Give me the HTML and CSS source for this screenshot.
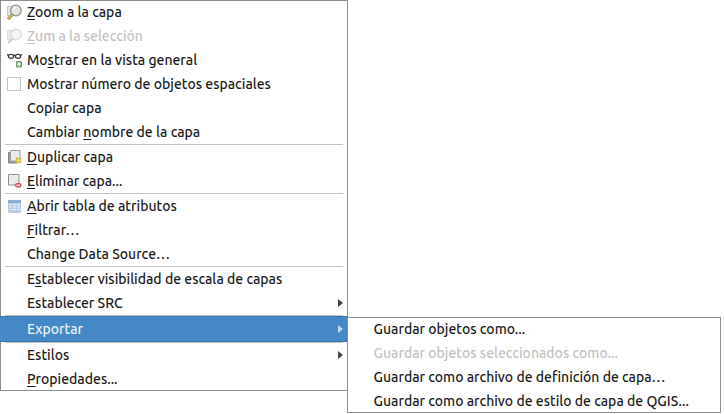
FILE: index.html
```html
<!DOCTYPE html>
<html lang="es">
<head>
<meta charset="utf-8">
<title>Menú de capa</title>
<link rel="stylesheet" href="styles.css">
</head>
<body>
<ul class="menu main" role="menu">
  <li><button class="item" role="menuitem"><svg class="icon" viewBox="0 0 16 16"><path d="M.5 2.500h8v9h-8z" fill="#e3e3e1" stroke="#c9c9c7"/><path d="M5.500 10.500 1 15" stroke="#8c8060" stroke-width="3"/><path d="M5.500 10.500 1 15" stroke="#e8bd35" stroke-width="1.600"/><circle cx="8.900" cy="6.500" r="5.300" fill="#e3e3e1" stroke="#91918f" stroke-width="1.200"/><path d="M6 5.500a3 3 0 0 1 3-2.200" fill="none" stroke="#fff" stroke-width="1.300"/></svg><span><u>Z</u>oom a la capa</span></button></li>
  <li><button class="item" role="menuitem" disabled><svg class="icon" viewBox="0 0 16 16"><path d="M.5 2.500h8v9h-8z" fill="#ececea" stroke="#deded9"/><path d="M5.500 10.500 1 15" stroke="#d5d5ce" stroke-width="2.500"/><circle cx="8.900" cy="6.500" r="5.300" fill="#f4f4f2" stroke="#d8d8d5" stroke-width="1.200"/></svg><span><u>Z</u>um a la selección</span></button></li>
  <li><button class="item" role="menuitem"><svg class="icon" viewBox="0 0 16 16"><g fill="none" stroke="#3a3a3a" stroke-width="1.300"><ellipse cx="4" cy="4.300" rx="2.600" ry="2"/><ellipse cx="11" cy="4.300" rx="2.600" ry="2"/><path d="M6.300 3.500q1.200-.8 2.400 0M1.500 3.500 0 2.300M13.500 3.500 15 2.300"/></g><rect x="9" y="9" width="6" height="6.500" rx="1.500" fill="#5e9b68"/><path d="M12 10v4.500M10 12.250h4" stroke="#fff" stroke-width="1.400"/></svg><span>Mo<u>s</u>trar en la vista general</span></button></li>
  <li><label class="item"><input class="icon check" type="checkbox"><span>Mostrar número de objetos espaciales</span></label></li>
  <li><button class="item" role="menuitem"><span>Copiar capa</span></button></li>
  <li><button class="item" role="menuitem"><span>Cambiar <u>n</u>ombre de la capa</span></button></li>
  <li class="line" role="separator"></li>
  <li><button class="item" role="menuitem"><svg class="icon" viewBox="0 0 16 16"><path d="M1.500 3.500h9v10.500h-9z" fill="#a4a4a2" stroke="#80807e"/><path d="M3.500 1.500h9.500v10.500H3.500z" fill="#ebebea" stroke="#9c9c9a"/><path d="M9.500 9.500h4v4h-4z" fill="#f2e88b" stroke="#cdbd45" stroke-width="1.400"/></svg><span><u>D</u>uplicar capa</span></button></li>
  <li><button class="item" role="menuitem"><svg class="icon" viewBox="0 0 16 16"><path d="M1.500 1.500h10.500v10.500h-10.500z" fill="#ebebea" stroke="#8c8c8a"/><rect x="8" y="10" width="6.500" height="4.500" rx="2" fill="#e2505b"/><path d="M9.500 12.200h3.500" stroke="#fff" stroke-width="1.200"/></svg><span><u>E</u>liminar capa...</span></button></li>
  <li class="line" role="separator"></li>
  <li><button class="item" role="menuitem"><svg class="icon" viewBox="0 0 16 16"><rect x="1" y="2" width="13" height="13" rx="1" fill="#b9cde6"/><path d="M1 2h13v3H1z" fill="#8fadd3"/><path d="M2.500 6.500h2M6 6.500h3M10 6.500h3M2.500 9h2M6 9h3M10 9h3M2.500 11.500h2M6 11.500h3M10 11.500h3" stroke="#f1f6fd" stroke-width="1.200"/></svg><span><u>A</u>brir tabla de atributos</span></button></li>
  <li><button class="item" role="menuitem"><span><u>F</u>iltrar…</span></button></li>
  <li><button class="item" role="menuitem"><span>Change Data Source…</span></button></li>
  <li class="line" role="separator"></li>
  <li><button class="item" role="menuitem"><span>E<u>s</u>tablecer visibilidad de escala de capas</span></button></li>
  <li><button class="item more" role="menuitem" aria-haspopup="true"><span>Establecer SRC</span></button></li>
  <li class="line" role="separator"></li>
  <li class="open">
    <button class="item more active" role="menuitem" aria-haspopup="true" aria-expanded="true"><span>Exportar</span></button>
    <ul class="menu sub" role="menu">
      <li><button class="item" role="menuitem"><span>Guardar objetos como...</span></button></li>
      <li><button class="item" role="menuitem" disabled><span>Guardar objetos seleccionados como...</span></button></li>
      <li><button class="item" role="menuitem"><span>Guardar como archivo de definición de capa…</span></button></li>
      <li><button class="item" role="menuitem"><span>Guardar como archivo de estilo de capa de QGIS...</span></button></li>
    </ul>
  </li>
  <li class="line" role="separator"></li>
  <li><button class="item more" role="menuitem" aria-haspopup="true"><span>Estilos</span></button></li>
  <li><button class="item" role="menuitem"><span><u>P</u>ropiedades...</span></button></li>
</ul>
</body>
</html>
```
FILE: styles.css
```css
* {
  box-sizing: border-box;
}

body {
  min-height: 100vh;
  margin: 0;
  background: #fff;
  color: #1c1c1c;
  font: 500 14px/24px Ubuntu, "Noto Sans", sans-serif;
}

.menu {
  margin: 0;
  padding: 0;
  list-style: none;
  background: #fff;
  box-shadow: inset 0 0 0 1px #8e8e8b;
}

.main {
  width: 48%;
}

.item {
  display: grid;
  grid-template-columns: 16px 1fr auto;
  column-gap: 4px;
  align-items: center;
  width: 100%;
  height: 24px;
  padding: 0 5px 0 7px;
  border: 0;
  background: none;
  color: inherit;
  font: inherit;
  text-align: left;
  white-space: nowrap;
}

.item span {
  grid-column: 2;
  grid-row: 1;
}

.item:disabled {
  color: #c3c3c3;
}

.item u {
  text-underline-offset: 2px;
  text-decoration-thickness: 1px;
  text-decoration-skip-ink: none;
}

.icon {
  grid-column: 1;
  grid-row: 1;
  width: 16px;
  height: 16px;
}

.check {
  appearance: none;
  width: 14px;
  height: 14px;
  margin: 0;
  border: 1px solid #c2c2c2;
  background: #fff;
}

.more::after {
  content: "";
  grid-column: 3;
  grid-row: 1;
  border: solid transparent;
  border-width: 4px 0 4px 5px;
  border-left-color: #444;
}

.line {
  height: 1px;
  margin: 0 5px;
  background: #c3c3c3;
}

.open {
  position: relative;
}

.active {
  height: 26px;
  border: solid #3c76ab;
  border-width: 1px 0;
  background: #4489c5;
  color: #e8f1f9;
}

.active::after {
  border-left-color: #c5dcf0;
}

.sub {
  position: absolute;
  top: 1px;
  left: calc(100% - 1px);
  padding-right: 23px;
}
```
